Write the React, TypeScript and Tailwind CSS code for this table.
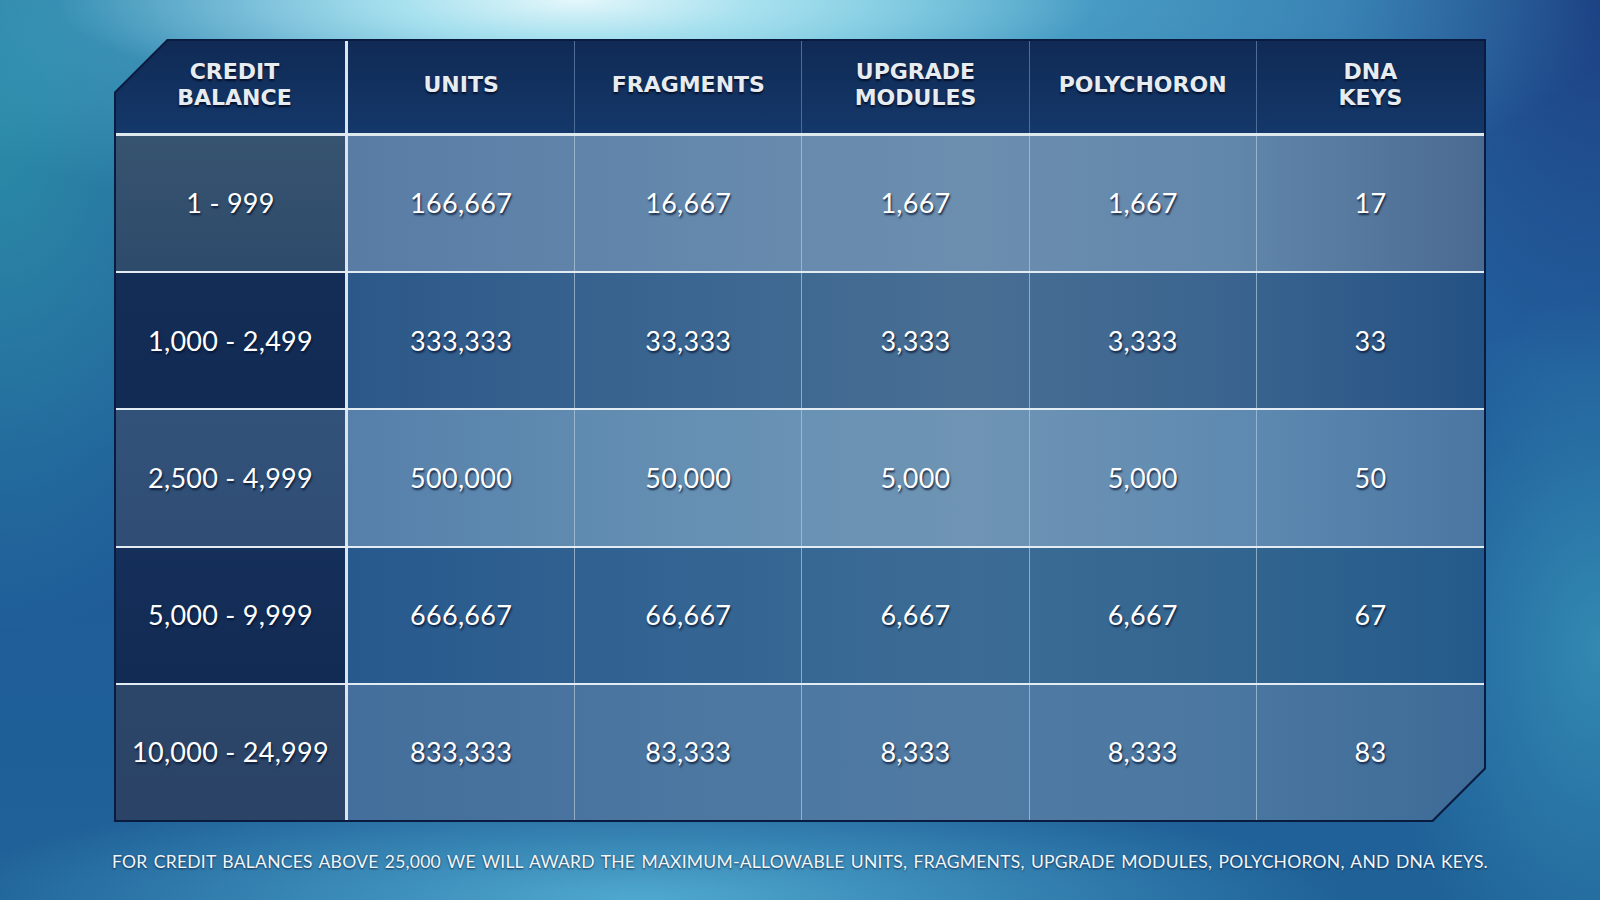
import React from 'react';

type Row = {
    range: string,
    values: string[],
    first: string,
    band: string
}

const headers: string[][] = [
    ['UNITS'],
    ['FRAGMENTS'],
    ['UPGRADE', 'MODULES'],
    ['POLYCHORON'],
    ['DNA', 'KEYS'],
];

const rows: Row[] = [
    {
        range: '1 - 999',
        values: ['166,667', '16,667', '1,667', '1,667', '17'],
        first: 'bg-[linear-gradient(180deg,#36536f,#2f4b6c)]',
        band: 'bg-[linear-gradient(90deg,#587ca4_0%,#6488ac_30%,#6c8eaf_55%,#6187ab_78%,#4b6a91_100%)]',
    },
    {
        range: '1,000 - 2,499',
        values: ['333,333', '33,333', '3,333', '3,333', '33'],
        first: 'bg-[linear-gradient(180deg,#132d56,#122b55)]',
        band: 'bg-[linear-gradient(90deg,#2c5889_0%,#3b6691_30%,#486e93_55%,#3a648f_78%,#245184_100%)]',
    },
    {
        range: '2,500 - 4,999',
        values: ['500,000', '50,000', '5,000', '5,000', '50'],
        first: 'bg-[linear-gradient(180deg,#33527a,#2f4d75)]',
        band: 'bg-[linear-gradient(90deg,#5680aa_0%,#6590b3_30%,#6f94b4_55%,#5f8ab1_78%,#4b76a2_100%)]',
    },
    {
        range: '5,000 - 9,999',
        values: ['666,667', '66,667', '6,667', '6,667', '67'],
        first: 'bg-[linear-gradient(180deg,#142f59,#122b55)]',
        band: 'bg-[linear-gradient(90deg,#27598d_0%,#336492_30%,#3c6c95_55%,#32658f_78%,#245a8b_100%)]',
    },
    {
        range: '10,000 - 24,999',
        values: ['833,333', '83,333', '8,333', '8,333', '83'],
        first: 'bg-[linear-gradient(180deg,#2c4669,#2a4366)]',
        band: 'bg-[linear-gradient(90deg,#446e9b_0%,#4c77a1_30%,#507aa2_55%,#4a77a1_78%,#3e6a97_100%)]',
    },
];

const headText = "font-['DejaVu_Sans',sans-serif] font-bold text-[22px] leading-[26px] text-[#e7ecf1] [text-shadow:0_2px_2px_rgba(3,12,35,0.9)]";
const numText = "font-['Lato',sans-serif] font-normal text-[27px] tracking-[0.01em] text-white [text-shadow:1px_2px_2px_rgba(5,18,45,0.8)]";

const App: React.FC = () => {
    return (
        <div className="w-[1600px] h-[900px] overflow-hidden flex flex-col items-center pt-[39px] bg-[radial-gradient(ellipse_520px_110px_at_36%_0%,#e4f7fb_0%,#a6e0ee_35%,transparent_100%),radial-gradient(ellipse_900px_260px_at_45%_0%,#5cbfda_0%,transparent_100%),radial-gradient(ellipse_700px_120px_at_40%_100%,#4fa9cf_0%,transparent_100%),radial-gradient(ellipse_300px_500px_at_0%_15%,#2a8aa6_0%,transparent_100%),radial-gradient(ellipse_260px_380px_at_100%_0%,#1b3f82_0%,transparent_100%),radial-gradient(ellipse_220px_360px_at_100%_72%,#3289b2_0%,transparent_100%),linear-gradient(180deg,#2a68a3_0%,#1f5a98_50%,#1f6298_100%)]">
            <div className="w-[1372px] h-[783px] p-[2px] bg-[#0a1b40] [clip-path:polygon(53px_0,100%_0,100%_calc(100%-53px),calc(100%-53px)_100%,0_100%,0_53px)]">
                <div className="w-full h-full flex flex-col [clip-path:polygon(52px_0,100%_0,100%_calc(100%-52px),calc(100%-52px)_100%,0_100%,0_52px)]">
                    {/* header */}
                    <div className="h-[95px] shrink-0 flex border-b-[3px] border-[#dfe7ef] bg-[linear-gradient(180deg,#102a55,#14386a)]">
                        <div className="w-[232px] shrink-0 border-r-[3px] border-[#dce5ef] flex flex-col items-center justify-center pl-[8px] pb-[4px]">
                            <span className={headText}>CREDIT</span>
                            <span className={headText}>BALANCE</span>
                        </div>
                        <div className="flex-1 grid grid-cols-5">
                            {headers.map((h, i) => (
                                <div key={i} className={`flex flex-col items-center justify-center pb-[4px] ${i < 4 ? 'border-r border-[#4d6d98]' : ''}`}>
                                    {h.map((line) => (
                                        <span key={line} className={headText}>{line}</span>
                                    ))}
                                </div>
                            ))}
                        </div>
                    </div>
                    {/* body */}
                    {rows.map((row, r) => (
                        <div key={row.range} className={`flex-1 flex ${r < rows.length - 1 ? 'border-b-2 border-[#e3ebf3]' : ''}`}>
                            <div className={`w-[232px] shrink-0 border-r-[3px] border-[#dce5ef] flex items-center justify-center ${row.first}`}>
                                <span className={numText}>{row.range}</span>
                            </div>
                            <div className={`flex-1 grid grid-cols-5 ${row.band}`}>
                                {row.values.map((v, i) => (
                                    <div key={i} className={`flex items-center justify-center ${i < 4 ? 'border-r border-[#b4c8dc]/70' : ''}`}>
                                        <span className={numText}>{v}</span>
                                    </div>
                                ))}
                            </div>
                        </div>
                    ))}
                </div>
            </div>
            <p className="mt-[30px] w-[1376px] whitespace-nowrap font-['Lato',sans-serif] text-[17.5px] leading-[20px] tracking-[0.014em] text-[#f2f6fa] [text-align-last:justify] [text-shadow:0_1px_2px_rgba(5,25,55,0.8)]">
                FOR CREDIT BALANCES ABOVE 25,000 WE WILL AWARD THE MAXIMUM-ALLOWABLE UNITS, FRAGMENTS, UPGRADE MODULES, POLYCHORON, AND DNA KEYS.
            </p>
        </div>
    );
};

export default App;
